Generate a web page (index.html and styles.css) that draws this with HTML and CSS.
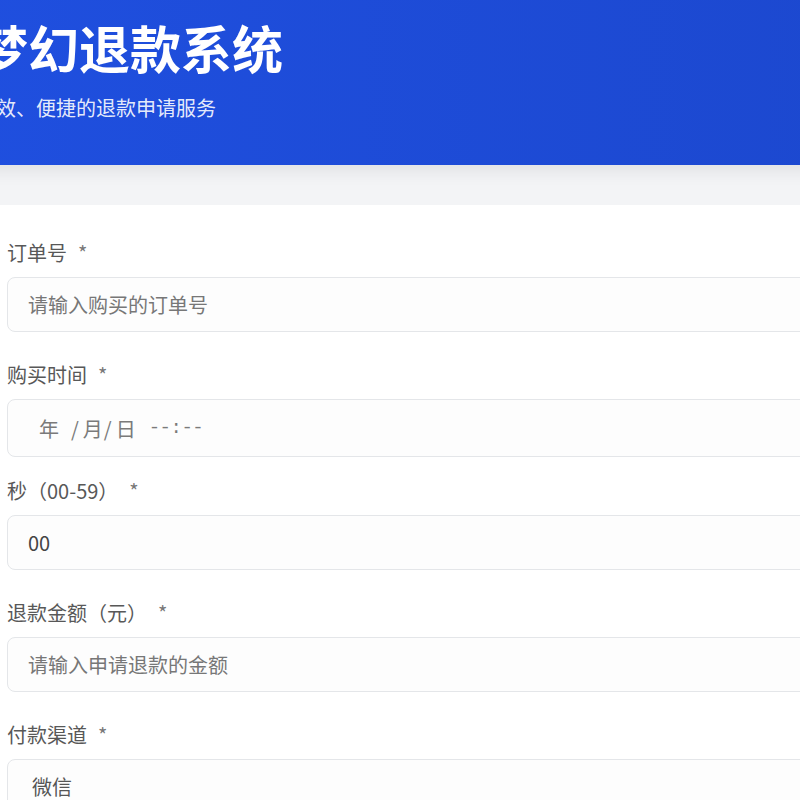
FILE: index.html
```html
<!DOCTYPE html>
<html lang="zh-CN">
<head>
  <meta charset="UTF-8">
  <title>梦幻退款系统</title>
  <link rel="stylesheet" href="styles.css">
</head>
<body>
  <div class="page">
    <header class="hero">
      <h1>梦幻退款系统</h1>
      <p>高效、便捷的退款申请服务</p>
    </header>

    <form class="card">
      <div class="field">
        <label for="orderNo">订单号<span class="req">*</span></label>
        <input type="text" id="orderNo" class="input" placeholder="请输入购买的订单号">
      </div>

      <div class="field field-date">
        <label>购买时间<span class="req">*</span></label>
        <div class="input date-input">
          <span>年</span><span class="sep">/</span><span class="m">月</span><span class="sep2">/</span><span class="d">日</span><span class="time">--:--</span>
        </div>
      </div>

      <div class="field">
        <label for="sec">秒（00-59）<span class="req">*</span></label>
        <input type="text" id="sec" class="input" value="00">
      </div>

      <div class="field">
        <label for="amount">退款金额（元）<span class="req">*</span></label>
        <input type="text" id="amount" class="input" placeholder="请输入申请退款的金额">
      </div>

      <div class="field">
        <label for="channel">付款渠道<span class="req">*</span></label>
        <select id="channel" class="input select">
          <option>微信</option>
          <option>支付宝</option>
        </select>
      </div>
    </form>
  </div>
</body>
</html>
```

FILE: styles.css
```css
* {
  box-sizing: border-box;
}

body {
  margin: 0;
  background-color: #f3f4f6;
  font-family: "Noto Sans CJK SC", "Noto Sans", sans-serif;
  color: #4b4b4b;
  overflow: hidden;
}

.page {
  margin-left: -40px;
  width: 920px;
}

.hero {
  background: linear-gradient(90deg, #1f4fdf, #1c48cf);
  padding: 16px 17px 42px;
  color: #ffffff;
  box-shadow: 0 6px 16px rgba(0, 0, 0, 0.08);
}

.hero h1 {
  margin: 0;
  font-size: 51px;
  line-height: 62px;
  font-weight: 700;
}

.hero p {
  margin: 15px 0 0 -1px;
  font-size: 20px;
  line-height: 30px;
  color: rgba(255, 255, 255, 0.9);
}

.card {
  margin: 40px 0 0 24px;
  background: #ffffff;
  padding: 33px 23px;
  border-radius: 12px;
}

.field {
  margin-bottom: 28px;
}

.field-date {
  margin-bottom: 19px;
}

.field label {
  display: block;
  font-size: 20px;
  line-height: 30px;
  color: #585858;
  margin-bottom: 9px;
}

.req {
  margin-left: 11px;
  color: #777777;
}

.input {
  display: block;
  width: 100%;
  height: 55px;
  padding: 0 20px;
  border: 1px solid #e4e6e9;
  border-radius: 8px;
  background: #fdfdfd;
  font-family: inherit;
  font-size: 20px;
  color: #444444;
  outline: none;
}

.input::placeholder {
  color: #777777;
}

.date-input {
  height: 58px;
  padding-left: 31px;
  display: flex;
  align-items: center;
  color: #7a7a7a;
}

.date-input .sep {
  margin-left: 12px;
}

.date-input .m,
.date-input .d {
  margin-left: 4px;
}

.date-input .sep2 {
  margin-left: 1px;
}

.date-input .time {
  margin-left: 13px;
  font-family: "Liberation Mono", monospace;
  font-size: 19px;
  letter-spacing: -0.5px;
}

.select {
  appearance: none;
  padding-left: 24px;
  color: #555555;
}
```
